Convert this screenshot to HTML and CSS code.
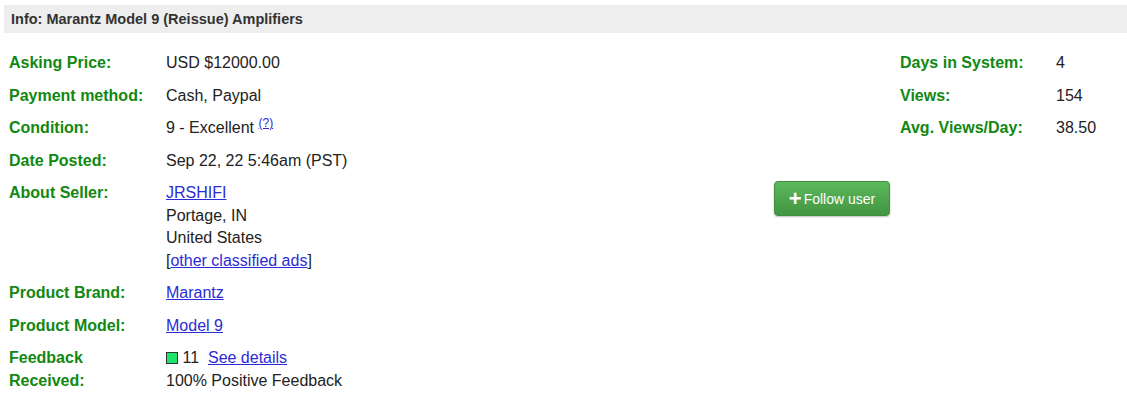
FILE: index.html
```html
<!DOCTYPE html>
<html>
<head>
    <title>Info: Marantz Model 9 (Reissue) Amplifiers</title>
    <link rel="stylesheet" href="styles.css">
</head>
<body>
    <div class="info-box">
        <div class="info-title">Info: Marantz Model 9 (Reissue) Amplifiers</div>

        <div class="details">
            <table class="main-table">
                <colgroup>
                    <col class="col-label">
                    <col class="col-value">
                    <col class="col-action">
                </colgroup>
                <tr>
                    <td class="label">Asking Price:</td>
                    <td>USD $12000.00</td>
                    <td></td>
                </tr>
                <tr>
                    <td class="label">Payment method:</td>
                    <td>Cash, Paypal</td>
                    <td></td>
                </tr>
                <tr>
                    <td class="label">Condition:</td>
                    <td>9 - Excellent <sup><a href="#">(?)</a></sup></td>
                    <td></td>
                </tr>
                <tr>
                    <td class="label">Date Posted:</td>
                    <td>Sep 22, 22 5:46am (PST)</td>
                    <td></td>
                </tr>
                <tr>
                    <td class="label">About Seller:</td>
                    <td>
                        <a href="#">JRSHIFI</a><br>
                        Portage, IN<br>
                        United States<br>
                        [<a href="#">other classified ads</a>]
                    </td>
                    <td>
                        <button class="btn-follow"><span class="plus">+</span>Follow user</button>
                    </td>
                </tr>
                <tr>
                    <td class="label">Product Brand:</td>
                    <td><a href="#">Marantz</a></td>
                    <td></td>
                </tr>
                <tr>
                    <td class="label">Product Model:</td>
                    <td><a href="#">Model 9</a></td>
                    <td></td>
                </tr>
                <tr>
                    <td class="label">Feedback Received:</td>
                    <td>
                        <span class="fb-square"></span> 11&nbsp; <a href="#">See details</a><br>
                        100% Positive Feedback
                    </td>
                    <td></td>
                </tr>
            </table>

            <table class="side-table">
                <tr>
                    <td class="label">Days in System:</td>
                    <td>4</td>
                </tr>
                <tr>
                    <td class="label">Views:</td>
                    <td>154</td>
                </tr>
                <tr>
                    <td class="label">Avg. Views/Day:</td>
                    <td>38.50</td>
                </tr>
            </table>
        </div>
    </div>
</body>
</html>
```

FILE: styles.css
```css
body {
    margin: 0;
    padding: 5px 0 0 4px;
    font-family: "Liberation Sans", Arial, sans-serif;
    font-size: 16px;
    color: #222;
    background: #fff;
}
.info-title {
    background: #eeeeee;
    color: #333;
    font-size: 14.5px;
    font-weight: bold;
    height: 28px;
    line-height: 28px;
    padding-left: 7px;
}
.details {
    display: flex;
    align-items: flex-start;
    margin-top: 14px;
}
table {
    border-collapse: collapse;
}
td {
    padding: 5px;
    line-height: 22.5px;
    vertical-align: top;
}
.main-table {
    table-layout: fixed;
    width: 891px;
}
.col-label {
    width: 157px;
}
.col-action {
    width: 126px;
}
.label {
    color: #118811;
    font-weight: bold;
}
.side-table td:first-child {
    width: 146px;
}
a {
    color: #2b2bd6;
}
sup {
    font-size: 12px;
    line-height: 0;
}
.fb-square {
    display: inline-block;
    width: 10px;
    height: 10px;
    background: #1de46a;
    border: 1px solid #333;
    vertical-align: -1px;
}
.btn-follow {
    margin-top: -1px;
    width: 116px;
    height: 35px;
    border: 1px solid #3e8f3e;
    border-radius: 4px;
    background: linear-gradient(#5cb85c, #419641);
    box-shadow: 0 1px 2px rgba(0, 0, 0, 0.25);
    color: #fff;
    font-family: "Liberation Sans", Arial, sans-serif;
    font-size: 14px;
    padding: 0;
    cursor: pointer;
}
.plus {
    font-weight: bold;
    font-size: 22px;
    vertical-align: -2px;
    margin-right: 2px;
}
```
